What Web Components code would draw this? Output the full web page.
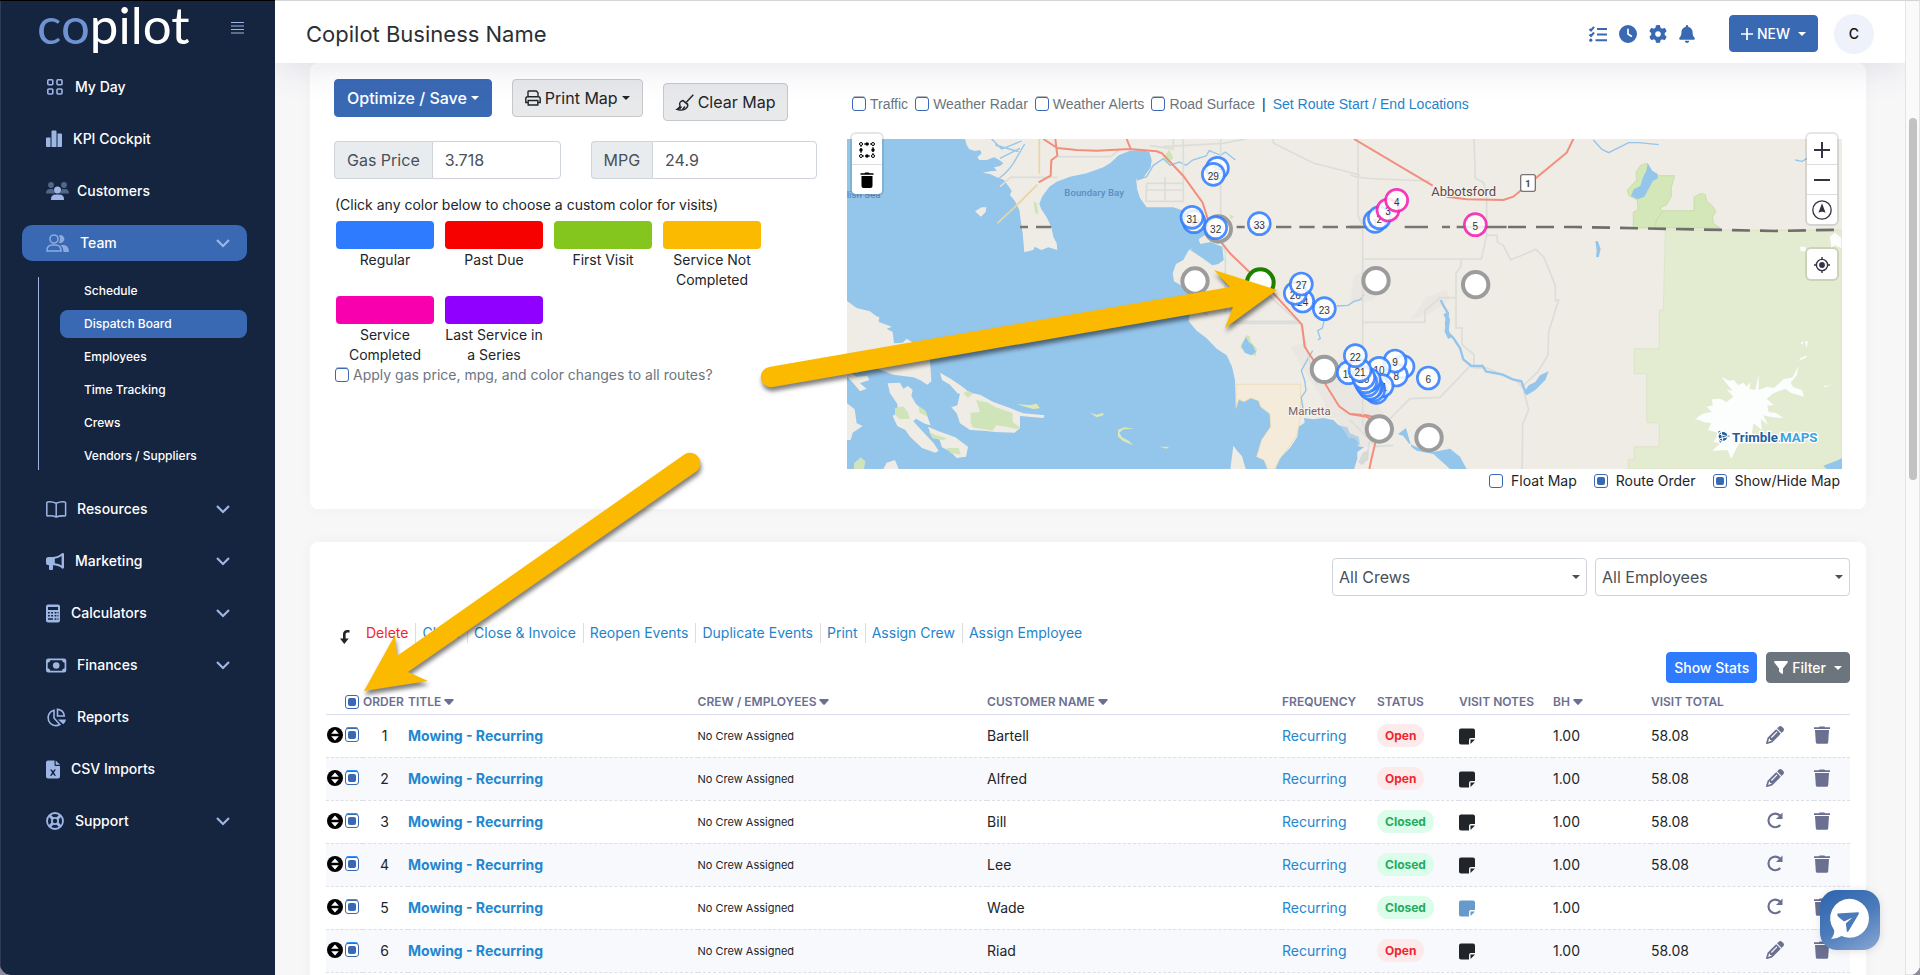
<!DOCTYPE html>
<html lang="en">
<head>
<meta charset="utf-8">
<title>Copilot - Dispatch Board</title>
<style>
  html, body { margin: 0; height: 100%; }
  body { background: #8e8b9d; font-family: Inter, "Liberation Sans", sans-serif; font-size: 14px; line-height: 20px; color: #212529; overflow: hidden; }
</style>
</head>
<body>
<app-shell></app-shell>
<script>
const define = (name, html, setup) => {
  const template = document.createElement('template');
  template.innerHTML = html;
  customElements.define(name, class extends HTMLElement {
    constructor() {
      super();
      this.attachShadow({ mode: 'open' }).append(template.content.cloneNode(true));
    }
    connectedCallback() {
      if (setup && !this.ready) { this.ready = true; setup.call(this, this.shadowRoot); }
    }
  });
};

/* name: [width, height, viewBox, markup] */
const ICONS = {
  menu: [13, 12, '0 0 13 12', '<path d="M0 .5h13M0 4h13M0 7.500h13M0 11h13" stroke="currentColor" stroke-width="1.200"/>'],
  grid: [18, 18, '0 0 18 18', '<g fill="none" stroke="currentColor" stroke-width="1.600"><rect x="1.800" y="1.800" width="5" height="5" rx="1"/><rect x="11" y="1.800" width="5" height="5" rx="1"/><rect x="1.800" y="11" width="5" height="5" rx="1"/><rect x="11" y="11" width="5" height="5" rx="1"/></g>'],
  bars: [16, 18, '0 0 16 18', '<path d="M0 8.500q0-1 1-1h3.500V17H1q-1 0-1-1zM5.500 1.500q0-1 1-1h3q1 0 1 1V17h-5zM11.500 3.500H15q1 0 1 1V16q0 1-1 1h-3.500z"/>'],
  customers: [20, 20, '1 0 20 20', '<g opacity=".45"><circle cx="6" cy="4" r="2.900"/><circle cx="19" cy="4" r="2.900"/><path d="M1 12.500q0-4.500 4-4.500h3l2 4.500zM24 12.500q0-4.500-4-4.500h-3l-2 4.500z"/></g><circle cx="12.500" cy="9" r="3.500"/><path d="M6 19q-.5-5.500 5-5.500h3q5.500 0 5 5.500z"/>'],
  team: [23, 20, '0 0 23 20', '<g opacity=".85"><circle cx="8" cy="6" r="4" fill="none" stroke="currentColor" stroke-width="1.600"/><path d="M1 18q-.3-6 5.500-6h3q5.500 0 5.500 6z" fill="none" stroke="currentColor" stroke-width="1.600"/><path d="M13 2.300a4 4 0 1 1 0 7.500q2-3.700 0-7.500zM16 12h2q5 1 5 7h-5.500q0-4.500-3-6.800z"/></g>'],
  book: [20, 17, '0 0 20 17', '<path d="M10.200 2.300Q6 .4 1.500 1q-.7 0-.7.700v12.600q0 .7.700.7 5-.5 8.700 1 4-1.500 8.700-1 .7 0 .7-.7V1.700q0-.7-.7-.7-4.500-.6-8.700 1.300zv13.500" fill="none" stroke="currentColor" stroke-width="1.500"/>'],
  horn: [18, 19, '0 0 18 19', '<path d="M16 1.200c.8-.6 2-.2 2 .8v13.600c0 1-1.200 1.500-2 .8Q13 13.600 7 13.300V17q0 1-1 1H4q-1 0-1-1v-3.700q-3 0-3-2.500V7.500q0-2.500 2.500-2.500H7Q13 4.200 16 1.200zM15.600 4Q12.500 6.300 8.800 6.700v4.600q4 .3 6.800 2.300z" fill-rule="evenodd"/>'],
  calc: [14, 19, '0 0 14 19', '<path fill-rule="evenodd" d="M2 .5h10q2 0 2 2v14q0 2-2 2H2q-2 0-2-2v-14q0-2 2-2zM2 3v3h10V3zM2 8v1.600h1.800V8zM5.200 8v1.600H7V8zM8.600 8v1.600h1.800V8zM11.500 8v1.600h1V8zM2 11v1.600h1.800V11zM5.200 11v1.600H7V11zM8.600 11v1.600h1.800V11zM11.500 11v1.600h1V11zM2 14.200v1.600h5v-1.600zM8.600 14.200v1.600h1.800v-1.600zM11.500 14.200v1.600h1v-1.600z"/>'],
  money: [20, 15, '0 0 20 15', '<path fill-rule="evenodd" d="M2.300.5h15.700q2.300 0 2.300 2.300v9.400q0 2.300-2.300 2.300H2.300Q0 14.500 0 12.200V2.800Q0 .5 2.300.5zM4.300 2.200q-.3 2.300-2.600 2.600v5.400q2.300.3 2.600 2.600H16q.3-2.300 2.600-2.600V4.800q-2.300-.3-2.600-2.600z"/><circle cx="10.200" cy="7.500" r="3.300"/>'],
  pie: [20, 19, '0 0 20 19', '<g fill="none" stroke="currentColor" stroke-width="1.600"><path d="M8 2.200A7.800 7.800 0 1 0 13.800 16.500L8 10z"/><path d="M11.500 1.200V8h6.800q-.5-6-6.800-6.800z"/></g><path d="M12 11.500h8q-.2 2.500-2.800 4.800z"/>'],
  csv: [14, 19, '0 0 14 19', '<path fill-rule="evenodd" d="M2 .5h6.500V5q0 1 1 1H14v10.500q0 2-2 2H2q-2 0-2-2v-14q0-2 2-2zM4 9.500l2.100 3L4 15.700h1.700L7 13.700l1.300 2H10l-2.100-3.200 2.100-3H8.300L7 11.300 5.700 9.500z"/><path d="M9.700.5L14 4.800H9.700z"/>'],
  life: [18, 18, '0 0 18 18', '<g fill="none" stroke="currentColor"><circle cx="9" cy="9" r="8" stroke-width="1.800"/><circle cx="9" cy="9" r="3.100" stroke-width="1.800"/><path d="M3.500 3.500l3.300 3.300M14.500 3.500l-3.300 3.300M3.500 14.500l3.300-3.300M14.500 14.500l-3.300-3.300" stroke-width="3"/></g>'],
  chevron: [14, 9, '0 0 14 9', '<path d="M1 1l6 6 6-6" fill="none" stroke="currentColor" stroke-width="2.200"/>'],
  tasks: [18, 18, '0 0 18 18', '<path d="M.5 4l1.500 1.500L5 1.800M.5 9.500L2 11l3-3.500M8 4h10M8 9.500h10M6.500 15.200H18" fill="none" stroke="currentColor" stroke-width="2"/><circle cx="1.800" cy="15.200" r="1.600"/>'],
  clock: [18, 18, '0 0 512 512', '<path d="M256 0a256 256 0 1 1 0 512A256 256 0 1 1 256 0zM232 120V256c0 8 4 15.500 10.700 20l96 64c11 7.400 25.900 4.400 33.300-6.700s4.400-25.900-6.700-33.300L280 243.200V120c0-13.300-10.700-24-24-24s-24 10.700-24 24z"/>'],
  gear: [18, 18, '0 0 512 512', '<path d="M495.900 166.600c3.200 8.700 .5 18.400-6.400 24.600l-43.300 39.400c1.100 8.300 1.700 16.800 1.700 25.400s-.6 17.100-1.700 25.400l43.300 39.400c6.900 6.200 9.600 15.900 6.400 24.600c-4.400 11.900-9.700 23.300-15.800 34.300l-4.700 8.100c-6.600 11-14 21.400-22.100 31.200c-5.900 7.200-15.700 9.600-24.500 6.800l-55.700-17.700c-13.400 10.300-28.200 18.900-44 25.400l-12.500 57.100c-2 9.100-9 16.300-18.200 17.800c-13.800 2.300-28 3.500-42.500 3.500s-28.700-1.200-42.500-3.500c-9.200-1.500-16.200-8.700-18.200-17.800l-12.500-57.100c-15.800-6.500-30.600-15.100-44-25.400L83.100 425.900c-8.800 2.800-18.600 .3-24.500-6.800c-8.100-9.800-15.500-20.200-22.100-31.200l-4.700-8.100c-6.100-11-11.400-22.400-15.800-34.300c-3.200-8.700-.5-18.400 6.400-24.600l43.300-39.400C64.600 273.100 64 264.600 64 256s.6-17.100 1.700-25.400L22.400 191.200c-6.900-6.200-9.600-15.900-6.400-24.600c4.400-11.900 9.700-23.300 15.800-34.300l4.700-8.100c6.600-11 14-21.400 22.100-31.200c5.900-7.200 15.700-9.600 24.500-6.800l55.700 17.700c13.400-10.300 28.200-18.900 44-25.400l12.500-57.100c2-9.100 9-16.300 18.200-17.800C227.300 1.200 241.500 0 256 0s28.700 1.200 42.500 3.500c9.200 1.500 16.200 8.700 18.200 17.800l12.500 57.100c15.800 6.500 30.600 15.100 44 25.400l55.700-17.700c8.800-2.800 18.600-.3 24.500 6.800c8.100 9.800 15.500 20.200 22.100 31.200l4.700 8.100c6.100 11 11.400 22.400 15.800 34.300zM256 336a80 80 0 1 0 0-160 80 80 0 1 0 0 160z"/>'],
  bell: [16, 18, '0 0 448 512', '<path d="M224 0c-17.700 0-32 14.300-32 32V51.200C119 66 64 130.600 64 208v18.800c0 47-17.300 92.400-48.500 127.600l-7.400 8.300c-8.400 9.400-10.400 22.900-5.300 34.400S19.400 416 32 416H416c12.600 0 24-7.400 29.200-18.900s3.100-25-5.300-34.400l-7.400-8.300C401.300 319.200 384 273.900 384 226.800V208c0-77.400-55-142-128-156.800V32c0-17.700-14.300-32-32-32zm45.300 493.300c12-12 18.700-28.300 18.700-45.300H160c0 17 6.700 33.300 18.700 45.300s28.300 18.700 45.300 18.700s33.300-6.700 45.300-18.700z"/>'],
  plus: [12, 12, '0 0 12 12', '<path d="M6 0v12M0 6h12" stroke="currentColor" stroke-width="1.700"/>'],
  printer: [16, 16, '0 0 16 16', '<g fill="none" stroke="currentColor" stroke-width="1.400"><path d="M3 6.500V1.700Q3 1 3.700 1h7.600L13 2.700v3.800M3 12.500H.8V8.700q0-2 2-2h10.400q2 0 2 2v3.800H13"/><path d="M3.200 10.500h9.600V15H3.200z"/></g>'],
  brush: [18, 17, '0 0 18 17', '<g fill="none" stroke="currentColor" stroke-width="1.400"><path d="M17.300.7l-7 7.500"/><path d="M7 6.500Q2.500 8 4 11.500q.3 2-3 3.800 6 2 9-.8 2.500-2 1.500-4.500zM6.800 6.500l4.700 4"/><path d="M3.500 15l2-2.500M6.500 15.500L9 12.500"/></g>'],
  turn: [10, 14, '0 0 10 14', '<path d="M9.500 1.300H7.300q-3 0-3 3V9" fill="none" stroke="currentColor" stroke-width="2.600"/><path d="M0 8.500h8.700L4.300 14z"/>'],
  sort: [10, 6, '0 0 10 6', '<path d="M1 0h8q1.300.2.500 1.200L5.800 5.500q-.8.700-1.600 0L.5 1.200Q-.3.200 1 0z"/>'],
  handle: [16, 16, '0 0 16 16', '<circle cx="8" cy="8" r="8" fill="#000"/><path d="M8 2.600l3.800 4.200H4.200zM8 13.400l3.800-4.200H4.200z" fill="#fff"/>'],
  note: [16, 17, '0 0 16 17', '<path d="M2 .5h12q2 0 2 2V10h-4q-2 0-2 2v4.500H2q-2 0-2-2v-12q0-2 2-2z"/><path d="M11.500 11.500H16l-4.500 4.500z"/>'],
  pencil: [18, 18, '0 0 512 512', '<path d="M410.300 231l11.300-11.300-33.900-33.900-62.100-62.100L291.700 89.800l-11.300 11.300-22.600 22.600L58.600 322.900c-10.400 10.400-18 23.300-22.200 37.400L1 480.700c-2.500 8.400-.2 17.500 6.100 23.700s15.300 8.500 23.700 6.100l120.300-35.400c14.100-4.200 27-11.800 37.400-22.200L387.700 253.700 410.300 231zM160 399.400l-9.100 22.700c-4 3.100-8.500 5.400-13.300 6.900L59.400 452l23-78.100c1.400-4.900 3.800-9.400 6.900-13.300l22.700-9.100v32c0 8.800 7.200 16 16 16h32zM362.700 18.700L348.300 33.200 325.700 55.800 314.300 67.100l33.900 33.900 62.100 62.100 33.900 33.900 11.300-11.300 22.600-22.600 14.500-14.500c25-25 25-65.500 0-90.500L453.300 18.700c-25-25-65.500-25-90.500 0zm-47.400 168l-144 144c-6.200 6.200-16.400 6.200-22.600 0s-6.200-16.400 0-22.600l144-144c6.200-6.200 16.400-6.200 22.600 0s6.200 16.400 0 22.600z"/>'],
  trash: [16, 18, '0 0 16 18', '<path d="M0 1.300h5L5.600.4h4.800l.6.900h5V3H0zM1 4h14l-.8 12.300q-.1 1.500-1.600 1.500H3.400q-1.500 0-1.600-1.500z"/>'],
  redo: [17, 17, '0 0 17 17', '<path d="M14 3.500A6.800 6.800 0 1 0 14.300 13" fill="none" stroke="currentColor" stroke-width="2.100"/><path d="M16.500.5V7H10z"/>'],
  funnel: [14, 13, '0 0 14 13', '<path d="M1 0h12q1.500.3.500 1.700L9 7.500V12q-.2 1.300-1.300.7L5.500 11q-.5-.4-.5-1V7.500L.5 1.700Q-.5.300 1 0z"/>'],
  polygon: [18, 18, '0 0 18 18', '<path d="M3 3h12v12H3z" fill="none" stroke="#000" stroke-dasharray="2 1"/><g fill="#fff" stroke="#000"><circle cx="3" cy="3" r="1.500"/><circle cx="15" cy="3" r="1.500"/><circle cx="3" cy="15" r="1.500"/><circle cx="15" cy="15" r="1.500"/></g><circle cx="9" cy="3" r="1.700"/><circle cx="9" cy="15" r="1.700"/><circle cx="3" cy="9" r="1.700"/><circle cx="15" cy="9" r="1.700"/>'],
  bin: [14, 16, '0 0 14 16', '<path d="M.5 1.300h4L5.200.4h3.600l.7.900h4v1.500H.5zM1.500 4h11v10q0 2-2 2h-7q-2 0-2-2z"/>'],
  zoomin: [16, 16, '0 0 16 16', '<path d="M8 0v16M0 8h16" stroke="currentColor" stroke-width="2"/>'],
  zoomout: [16, 16, '0 0 16 16', '<path d="M0 8h16" stroke="currentColor" stroke-width="2"/>'],
  compass: [20, 20, '0 0 20 20', '<circle cx="10" cy="10" r="9.200" fill="none" stroke="currentColor" stroke-width="1.300"/><path d="M10 3.300l3.600 9.500Q10 10.800 6.400 12.800z"/>'],
  locate: [16, 16, '0 0 16 16', '<circle cx="8" cy="8" r="5.600" fill="none" stroke="currentColor" stroke-width="1.400"/><circle cx="8" cy="8" r="2.900"/><path d="M8 0v3M8 13v3M0 8h3M13 8h3" stroke="currentColor" stroke-width="1.400"/>'],
  chat: [60, 60, '0 0 60 60', '<path d="M29.500 8.800a19.500 19.500 0 1 1-8 37.300Q17 49 11 49q3.500-4 3.200-8.800A19.500 19.500 0 0 1 29.500 8.800z" fill="#fff"/><path d="M17.500 23.500L38 22.300q1.500.2.800 1.700L28.300 41.500q-1 1-1.500-.5l-1-7.500 6.700-6-8.500 4-5.500-4.500q-2-2-1-3.500z" fill="#4a7ab9"/>'],
};

define('ui-icon', `<style>:host{display:inline-flex;flex:none}svg{display:block;overflow:visible;fill:currentColor}</style><svg aria-hidden="true"></svg>`,
function (root) {
  const [w, h, box, body] = ICONS[this.getAttribute('name')];
  const svg = root.querySelector('svg');
  svg.setAttribute('width', w); svg.setAttribute('height', h);
  svg.setAttribute('viewBox', box); svg.innerHTML = body;
});

define('check-box', `
<style>
  :host { display: inline-flex; color: #6c757d; }
  label { display: inline-flex; align-items: center; gap: var(--gap, 4px); white-space: nowrap; }
  input { appearance: none; display: grid; place-items: center; width: 14px; height: 14px; margin: 0; border: 1px solid #3a69b4; border-radius: 3px; background: #fff; box-shadow: 0 -2px 0 -1px var(--lip, transparent); }
  input:checked::before { content: ""; width: 8px; height: 8px; border-radius: 2px; background: #3a69b4; }
  :host([bare]) slot { display: none; }
</style>
<label><input type="checkbox"><slot></slot></label>`,
function (root) {
  const input = root.querySelector('input');
  input.checked = this.hasAttribute('checked');
  if (this.hasAttribute('bare')) input.setAttribute('aria-label', this.getAttribute('bare'));
});

define('ui-button', `
<style>
  :host { display: inline-flex; }
  button { display: inline-flex; align-items: center; justify-content: center; gap: 4px; box-sizing: border-box; width: 100%; height: 38px; padding: 0 12px; border: 1px solid #c6c8ca; border-radius: 4px; background: #e7e9eb; color: #212529; font: 400 16px/24px Inter, sans-serif; white-space: nowrap; }
  :host([tone=primary]) button { background: #3a69b4; border-color: #3a69b4; color: #fff; font-weight: 500; }
  :host([tone=bright]) button { background: #2f7bff; border-color: #2f7bff; color: #fff; }
  :host([tone=dark]) button { background: #6c757d; border-color: #6c757d; color: #fff; }
  :host([size=small]) button { height: 31px; padding: 0 7px; font-size: 14px; font-weight: 500; }
  :host([size=medium]) button { font-size: 14px; padding: 0 11px; height: 37px; }
  :host([caret]) button::after { content: ""; border: 4px solid transparent; border-top-color: currentColor; border-bottom: 0; }
  :host([size]) button::after { margin-left: 4px; }
</style>
<button type="button"><slot></slot></button>`);

define('nav-item', `
<style>
  :host { display: block; }
  a { display: flex; align-items: center; gap: 11px; box-sizing: border-box; height: 36px; margin: 0 28px 0 22px; padding: 0 17px 0 24px; border-radius: 10px; color: #fff; font-weight: 500; text-decoration: none; }
  :host([active]) a { background: #3a69b4; }
  ui-icon { color: #9db6e4; }
  .chevron { margin-left: auto; }
</style>
<a href="#"><slot></slot></a>`,
function (root) {
  const link = root.querySelector('a');
  link.insertAdjacentHTML('afterbegin', `<ui-icon name="${this.getAttribute('icon')}"></ui-icon>`);
  if (this.hasAttribute('expands')) link.insertAdjacentHTML('beforeend', '<ui-icon class="chevron" name="chevron"></ui-icon>');
});

define('side-nav', `
<style>
  :host { display: block; background: #15243f; color: #fff; box-shadow: inset 1px 0 #2d3b55; overflow: hidden; }
  .brand { display: flex; align-items: flex-start; justify-content: space-between; height: 68px; padding: 0 31px 0 37px; }
  .logo { font: 400 51px/48px Lato, sans-serif; color: #fff; }
  .logo b { font-weight: 400; color: #6f93d2; }
  .brand ui-icon { color: #9db6e4; margin-top: 21px; }
  nav { display: flex; flex-direction: column; gap: 16px; }
  ul { list-style: none; display: flex; flex-direction: column; gap: 5px; margin: 0 28px 5px 38px; padding: 0 0 0 21px; border-left: 1px solid #9db6e4; }
  li a { display: block; height: 28px; line-height: 28px; padding-left: 24px; border-radius: 8px; font-size: 12px; font-weight: 500; color: #fff; text-decoration: none; }
  li a.on { background: #3a69b4; }
</style>
<div class="brand"><span class="logo"><b>co</b>pilot</span><ui-icon name="menu"></ui-icon></div>
<nav>
  <nav-item icon="grid">My Day</nav-item>
  <nav-item icon="bars">KPI Cockpit</nav-item>
  <nav-item icon="customers">Customers</nav-item>
  <nav-item icon="team" active expands>Team</nav-item>
  <ul>
    <li><a href="#">Schedule</a></li>
    <li><a href="#" class="on">Dispatch Board</a></li>
    <li><a href="#">Employees</a></li>
    <li><a href="#">Time Tracking</a></li>
    <li><a href="#">Crews</a></li>
    <li><a href="#">Vendors / Suppliers</a></li>
  </ul>
  <nav-item icon="book" expands>Resources</nav-item>
  <nav-item icon="horn" expands>Marketing</nav-item>
  <nav-item icon="calc" expands>Calculators</nav-item>
  <nav-item icon="money" expands>Finances</nav-item>
  <nav-item icon="pie">Reports</nav-item>
  <nav-item icon="csv">CSV Imports</nav-item>
  <nav-item icon="life" expands>Support</nav-item>
</nav>`);

define('top-bar', `
<style>
  :host { display: flex; align-items: center; box-sizing: border-box; height: 63px; padding: 3px 31px 0; background: #fff; border-top: 1px solid #d4d4d6; box-shadow: 0 4px 36px rgba(60, 60, 110, .13); position: relative; z-index: 1; }
  h1 { margin: 0; font-size: 22px; line-height: 30px; font-weight: 400; color: #2c2f33; flex: 1; }
  .icons { display: flex; gap: 12px; margin-right: 34px; color: #3a69b4; }
  .avatar { width: 40px; height: 40px; margin-left: 16px; border: 0; border-radius: 50%; background: #eff2fa; color: #111; font: 500 14px Inter, sans-serif; }
</style>
<h1>Copilot Business Name</h1>
<div class="icons"><ui-icon name="tasks"></ui-icon><ui-icon name="clock"></ui-icon><ui-icon name="gear"></ui-icon><ui-icon name="bell"></ui-icon></div>
<ui-button tone="primary" size="medium" caret><ui-icon name="plus"></ui-icon>NEW</ui-button>
<button class="avatar" type="button">C</button>`);

define('input-group', `
<style>
  :host { display: flex; min-width: 0; }
  label { box-sizing: border-box; height: 38px; padding: 6px 12px; border: 1px solid #ced4da; border-right: 0; border-radius: 4px 0 0 4px; background: #e9ecef; font-size: 16px; line-height: 24px; color: #495057; white-space: nowrap; }
  input { box-sizing: border-box; flex: 1; width: 0; min-width: 0; height: 38px; padding: 0 12px; border: 1px solid #ced4da; border-radius: 0 4px 4px 0; background: #fff; font: 400 16px Inter, sans-serif; color: #495057; }
</style>
<label for="field"><slot></slot></label><input id="field" type="text">`,
function (root) { root.querySelector('input').value = this.getAttribute('value'); });

define('route-settings', `
<style>
  :host { display: block; padding-top: 16px; }
  .actions { display: flex; align-items: flex-start; gap: 20px; height: 42px; }
  .actions ui-button:last-child { margin-top: 4px; }
  .fields { display: grid; grid-template-columns: repeat(2, minmax(0, 1fr)); gap: 30px; margin: 20px 6px 16px 0; }
  p { margin: 0 1px 6px; }
  .colors { display: grid; grid-template-columns: repeat(4, 98px); gap: 6px 11px; margin-left: 2px; }
  .colors button { display: flex; flex-direction: column; justify-content: flex-start; width: 100%; height: 69px; padding: 0; border: 0; background: none; font: inherit; color: inherit; }
  .colors i { flex: none; width: 98px; height: 28px; margin-bottom: 1px; border-radius: 4px; }
  .colors span { width: 98px; text-align: center; }
  check-box { --lip: #b5b8bd; margin-left: 1px; }
</style>
<div class="actions">
  <ui-button tone="primary" caret>Optimize / Save</ui-button>
  <ui-button caret><ui-icon name="printer"></ui-icon>Print Map</ui-button>
  <ui-button><ui-icon name="brush"></ui-icon>Clear Map</ui-button>
</div>
<div class="fields"><input-group value="3.718">Gas Price</input-group><input-group value="24.9">MPG</input-group></div>
<p>(Click any color below to choose a custom color for visits)</p>
<div class="colors">
  <button type="button"><i style="background:#2f7bff"></i><span>Regular</span></button>
  <button type="button"><i style="background:#f60000"></i><span>Past Due</span></button>
  <button type="button"><i style="background:#84c61e"></i><span>First Visit</span></button>
  <button type="button"><i style="background:#fbb900"></i><span>Service Not Completed</span></button>
  <button type="button"><i style="background:#f800ae"></i><span>Service Completed</span></button>
  <button type="button"><i style="background:#8f00ff"></i><span>Last Service in a Series</span></button>
</div>
<check-box>Apply gas price, mpg, and color changes to all routes?</check-box>`);

/* Pins in map units (three to a pixel), drawn in order; kind: b visit, p completed, g depot, s start */
const PINS = [
  [1135, 447, 'g'], [1065, 603, 'g'], [1261, 608, 's'], [1453, 868, 'g'], [1608, 602, 'g'], [1907, 614, 'g'], [1618, 1047, 'g'], [1767, 1073, 'g'],
  [1605, 424, 'b', '1'], [1618, 413, 'b', '2'], [1644, 390, 'p', '3'], [1670, 361, 'p', '4'], [1906, 434, 'p', '5'],
  [1765, 894, 'b', '6'], [1689, 860, 'b', '7'], [1669, 885, 'b', '8'], [1665, 843, 'b', '9'], [1617, 865, 'b', '10'],
  [1609, 937, 'b', '13'], [1626, 917, 'b', '11'], [1601, 930, 'b'], [1595, 920, 'b'], [1590, 925, 'b'], [1583, 915, 'b'], [1588, 899, 'b', '14'],
  [1525, 878, 'b', '19'], [1577, 905, 'b'], [1571, 893, 'b', '20'], [1560, 871, 'b', '21'], [1546, 827, 'b', '22'],
  [1453, 686, 'b', '23'], [1388, 663, 'b', '24'], [1366, 640, 'b', '26'], [1384, 612, 'b', '27'],
  [1132, 265, 'b', '28'], [1120, 283, 'b', '29'], [1062, 425, 'b', '30'], [1056, 412, 'b', '31'], [1127, 443, 'b', '32'], [1258, 431, 'b', '33'],
];

define('route-map', `
<style>
  :host { display: block; position: relative; height: 330px; }
  svg.map { display: block; width: 100%; height: 100%; background: #94c5eb; }
  text { font-family: Roboto, sans-serif; }
  .land { fill: #efece6; } .water { fill: #94c5eb; } .green { fill: #cfe4b9; } .park { fill: #d4e7b8; stroke: #bcd99a; stroke-width: 2; }
  .road { fill: none; stroke: #dcddd9; stroke-width: 5; } .high { fill: none; stroke: #f28e7c; stroke-width: 6; }
  .creek { fill: none; stroke: #94c5eb; stroke-width: 4; }
  .num { font: 30px "Liberation Sans", sans-serif; fill: #333; text-anchor: middle; }
  .tools { position: absolute; top: -5px; display: grid; width: 30px; border-radius: 4px; background: #fff; box-shadow: 0 0 0 2px rgba(0, 0, 0, .1); overflow: visible; }
  .left { left: 5px; } .right { right: 5px; } .lower { top: 110px; }
  .tools button { display: grid; place-items: center; width: 30px; height: 30px; padding: 0; border: 0; border-top: 1px solid #ddd; background: none; color: #333344; }
  .tools button:first-child { border-top-color: transparent; }
  .left button { color: #000; }
</style>
<svg class="map" viewBox="21 177 2985 990" preserveAspectRatio="xMidYMid slice" role="img" aria-label="Route map">
  <path class="land" d="M375 177L380 195 388 208 405 213 420 210 425 220 412 232 418 240 440 240 462 232 478 240 490 250 480 258 462 262 470 272 450 274 428 278 450 282 470 292 492 300 505 318 515 332 510 345 524 362 538 390 542 420 548 460 553 517 580 510 584 500 604 510 625 502 652 510 650 490 640 470 634 440 620 412 604 388 598 372 606 350 628 320 650 305 690 290 740 280 790 262 812 248 836 226 870 212 905 210 928 216 935 240 932 262 912 290 902 298 888 296 892 330 900 354 920 382 1000 382 1040 395 1080 412 1104 432 1110 455 1078 476 1060 500 1045 512 1030 540 1008 552 998 580 1002 604 1030 620 1060 634 1100 640 1125 632 1110 660 1080 690 1050 696 1046 724 1070 752 1100 775 1130 806 1160 826 1176 860 1185 900 1188 985 1196 958 1212 965 1232 954 1256 962 1262 980 1290 1002 1292 1040 1265 1080 1250 1130 1272 1140 1282 1167 1306 1167 1322 1132 1350 1104 1372 1070 1376 1040 1394 1028 1392 1014 1420 1018 1450 1014 1480 1020 1496 1036 1522 1042 1530 1060 1556 1070 1560 1092 1540 1112 1542 1140 1530 1150V1167H3006V177z"/>
  <g class="land">
    <path d="M21 663L50 684 90 694 108 708 118 712 116 726 156 740 140 746 158 756 162 790 188 788 200 776 222 790 250 796 268 818 272 870 274 904 262 914 240 900 220 892 160 884 100 862 84 850 40 842 70 868 50 880 21 860zM21 870L50 890 82 888 88 900 60 910 80 926 60 934 40 910 21 890z"/>
    <path d="M143 910L180 908 190 926 204 918 218 930 214 948 228 972 258 998 272 1036 256 1032 228 1016 220 1024 246 1052 280 1088 296 1112 286 1118 246 1104 210 1070 196 1050 172 1038 158 1008 174 996 172 972 150 940z"/>
    <path d="M264 1040L296 1054 346 1072 384 1100 378 1130 350 1134 330 1114 306 1102 298 1078 272 1062z"/>
    <path d="M300 878L332 896 364 918 390 938 378 946 352 940 330 914 306 900zM362 932L420 944 460 966 510 984 550 1000 614 1006 610 1014 540 1008 540 1044 524 1058 466 1056 430 1052 390 1050 360 1030 350 1000 334 982 352 976z"/>
    <path d="M21 970L44 988 50 1030 68 1038 38 1058 32 1080 21 1080zM130 1167L140 1148 165 1140 176 1167zM1180 1097L1194 1115 1206 1129 1217 1167H1171zM405 394L425 382 439 382 437 396 423 410z"/>
    <path d="M530 973L570 975 590 971 600 985 580 987 550 979zM750 998L770 1004 790 998 790 1006 770 1012zM834 1050L852 1042 882 1046 850 1048 838 1058 846 1072 866 1082 880 1096 850 1084 834 1070zM958 1100H988L980 1106z" style="fill:#dfe8b4"/>
  </g>
  <path d="M1188 913H1382V1010L1370 1066 1340 1110 1316 1140 1304 1167H1284L1272 1140 1250 1130 1265 1080 1292 1040 1290 1002 1262 980 1256 962 1232 954 1212 965 1196 958 1188 985z" style="fill:#f4ebda;stroke:#ecd9ae;stroke-width:2"/>
  <path class="water" d="M1075 476l6 16 30-6 36 14 4 40-16 12-18 4-30-22-36-24z"/>
  <path class="water" d="M0 663z"/>
  <g class="green">
    <path d="M408 960l36 8 20 12 54 20v26l22 16-10 6-30-8-32-4-10 16-60-10-6-14v-30l28-2zM165 985l24-6 14 16 6 22-30 0-14-12zM235 978l22 14 6 18-24-12zM266 1055l20 10 36 10-14 6-30-6zM320 1104l36 0 6 20-30-4zM370 940l14-8 16 8-16 14zM42 1150l20-18 14 12-4 23h-30zM580 365l10 4 6 34-10-4zM988 208l12 26-16 16-14-16zM1168 402l14 8-10 8zM1205 790l14-24 10 2 4 18 18 20-4 22-24-8-22-16zM1085 700l18-4v12z"/>
  </g>
  <path class="water" d="M1218 772l8 14 12 10 10 20-14 10-20-8-10-20z"/>
  <g style="fill:#e4e1dc;opacity:.4"><path d="M1350 800l40-10 30 70 60-20 110 0 50 60-40 60 40 50-30 80-60 20-60-90-80-120zM1455 960l50 0 10 60-60-10zM1540 590l50-30 40 50-30 50-70 10zM1760 650l60-20 10 30-60 40-60 20z"/></g>
  <path class="creek" d="M470 300q30-20 50-50l34-58M455 177l30 30 60-24M466 195l70 20M480 235l60-30M890 300l30-10 20-34 30-20 20 20 28-10 20 10 20-16 40-12 10-16 34 14 14-10 30 24M1490 678l34-2 18-12 20-6 10-14M1453 720l-6 24-14 8 8 24-8 4M1418 812l-12 20-22 40 10 30 4 30-14 20 6 40M2260 180l26 28 20 10 60-30h30l60 6M2866 240l20 4 22-12"/>
  <g class="road">
    <path d="M652 230h160l30-24M480 320l32-28h140M920 310h110v54H918zM975 290v74M1030 178v134M918 330h110M1142 177v300l14 40v180M1000 177v30l-70-10M970 200l180-10 70-14M1300 177v12l120 60 140 36M1290 650l90 80H1160M1382 735l30 120 20 60M1180 724h200"/>
  </g>
  <path d="M598 177v104M472 430l60-56 60-60" style="fill:none;stroke:#e9d4a4;stroke-width:5"/>
  <path class="high" d="M610 177L652 204 710 210 770 212 870 207 950 214 966 220 1030 288 1088 368 1108 432 1140 482 1170 520 1226 574 1300 640 1350 694 1386 734 1394 800 1430 856 1456 912 1498 980 1530 1002 1580 1006 1614 1014M646 177l6 50-18 14-2 46-36 20M860 177l12 30"/>
  <path d="M540 441h95M1190 441h375" style="fill:none;stroke:#777772;stroke-width:7;stroke-dasharray:46 24;stroke-dashoffset:22"/>
  <g transform="translate(1530 150)">
    <g class="road">
      <path d="M24 27v230l14 30v600M0 135q30 10 90 12l150 6M372 27l4 118 24 12 10 30v128l-16 72H38M410 316h32v20l18 10 22 44 76-32 24 24 34 84v46l10-2-30 95-2 70-30 50-46 44 18 70-18 44-2 160M334 390l-2 20-14 20v164h18v50l36 30v40h40l90 40 24 30M316 503h-46l-44 38-2 36H38M362 706l-92 96-90 4-70 70M0 870l80 80M50 980l20-100M70 950l60-4"/>
    </g>
    <path class="high" d="M12 27l236 140M290 200l60 8 110 2 30-10 160-132 20-41M0 852l50 8 30 20M76 938l-12 50-6 30"/>
    <path class="park" d="M892 100l-20 6-14 20 2 24-28 30 4 16 26 14 2 30-14 6v48h260l-20-14-2-20 10-16-14-20-14-10-4-20-14-4-20 12v40h-98l-4-8 20-10 14-24v-28l10-35h-50l-20 2z"/>
    <path class="park" d="M938 244l-18 24-6 26" style="fill:none"/>
    <path d="M946 300H1476V1017H835V988H853V950H927V878H890V731H853V656H928V541H940z" style="fill:#e3ebd1;stroke:#d8e3bf;stroke-width:2"/>
    <path d="M1030 882L1042 862 1062 850 1086 846 1070 830 1088 826 1086 808 1110 806 1130 816 1150 800 1130 778 1148 784 1114 740 1136 752 1152 750 1164 766 1180 758 1190 770 1202 756 1198 776 1216 780 1226 732 1226 780 1250 770 1272 774 1300 748 1328 742 1346 708 1340 736 1322 758 1330 772 1356 780 1362 800 1322 788 1306 776 1270 790 1250 806 1272 826 1252 826 1256 846 1280 850 1300 864 1268 862 1240 856 1254 884 1232 868 1236 900 1210 880 1206 910 1216 938 1190 912 1176 930 1164 946 1144 986 1132 960 1086 962 1112 940 1090 936 1108 910 1074 900 1084 880 1060 876 1040 868zM1440 320l14-12 20 16v30l-20-8-10 8zM1350 350l16 0 2 14-16 0zM1352 640l8-8-2 12zM1364 634l10 0-4 20zM1352 684l20-8-6 8-20 8zM1420 768l26-2-24 6z" style="fill:#fcfdfd"/>
    <path class="water" d="M893 100l14 22 16 10 0 14-14 6-26 48-20 8-20-10 8-20 20-10 8-26 10-20zM736 334l8 0 8 24-6 24-8-2 2-18zM596 724l-10 26-30 30-26 16-8-10 14-20 20-10 14-20zM168 894L144 912 160 918 176 940 200 952 250 966 300 956 330 980 350 1017H300L250 972 200 962 184 950zM1476 985l-24 10-20 8-12 4 10 10h46zM0 922l14 4 10 10-2 12 20 4-20 14 0 20-10 32H0z"/>
    <path d="M272 510l10 20 12 20-6 30 8 30 14 14 20 30 10 34 24 20 34 0 10 16 50 10 30 14 26 6 14 36" style="fill:none;stroke:#94c5eb;stroke-width:7"/>
    <path d="M286 550l8 20-4 34 10 20" style="fill:none;stroke:#94c5eb;stroke-width:12"/>
    <path d="M40 970l14-6-2 24-16 14-8-6z" style="fill:#cfe4b9;stroke:#dcd0ee;stroke-width:5"/>
    <path d="M0 291h110M164 291h70M276 291h24M320 291h150" style="fill:none;stroke:#777772;stroke-width:7"/>
    <path d="M474 291h200l600 12 200-4" style="fill:none;stroke:#6e6f6b;stroke-width:8;stroke-dasharray:54 30"/>
    <text x="341" y="198" font-size="39" text-anchor="middle" style="fill:#5f4745;stroke:#f6f3ee;stroke-width:6;paint-order:stroke">Abbotsford</text>
    <rect x="512" y="134" width="44" height="50" rx="6" fill="#fff" stroke="#777" stroke-width="4"/>
    <text x="534" y="170" font-size="28" text-anchor="middle" font-weight="700" fill="#444">1</text>
    <g style="stroke:#fff;stroke-width:8;paint-order:stroke">
      <path d="M1106 902l34 16-30 20-6-18z" fill="#1d5f9e"/><circle cx="1119" cy="919" r="13" fill="#1d5f9e"/>
      <text x="1146" y="935" font-size="40" font-weight="700" fill="#1d5f9e">Trimble.</text>
      <text x="1290" y="935" font-size="40" font-weight="700" fill="#3aa5dc">MAPS</text>
    </g>
    <path d="M1108 912l24 8M1108 926l22-4M1114 906l4 26" stroke="#fff" stroke-width="3"/>
  </g>
  <text x="673" y="349" font-size="29" font-weight="500" style="fill:#5f8cbf">Boundary Bay</text>
  <text x="20" y="353" font-size="29" font-weight="500" style="fill:#5f8cbf">lish Sea</text>
  <text x="1345" y="1004" font-size="34" style="fill:#7d5f5c;stroke:#f6f3ee;stroke-width:6;paint-order:stroke">Marietta</text>
  <g id="pins"></g>
</svg>
<div class="tools left"><button type="button" aria-label="Select area"><ui-icon name="polygon"></ui-icon></button><button type="button" aria-label="Clear selection"><ui-icon name="bin"></ui-icon></button></div>
<div class="tools right"><button type="button" aria-label="Zoom in"><ui-icon name="zoomin"></ui-icon></button><button type="button" aria-label="Zoom out"><ui-icon name="zoomout"></ui-icon></button><button type="button" aria-label="Reset north"><ui-icon name="compass"></ui-icon></button></div>
<div class="tools right lower"><button type="button" aria-label="My location"><ui-icon name="locate"></ui-icon></button></div>`,
function (root) {
  const ring = { b: ['#2f7bff', 33, 8], p: ['#f51bb0', 33, 8], g: ['#9c9c9c', 38, 12], s: ['#1f8000', 40, 12] };
  root.getElementById('pins').innerHTML = PINS.map(([x, y, kind, text = '']) => {
    const [color, r, w] = ring[kind];
    const fade = kind === 'b' || kind === 'p' ? 0.86 : 1;
    return `<circle cx="${x}" cy="${y}" r="${r}" fill="#fff" fill-opacity="${fade}" stroke="${color}" stroke-opacity="${fade}" stroke-width="${w}"/>` +
      (text && `<text class="num" x="${x}" y="${y + 16}">${text}</text>`);
  }).join('');
});

define('map-panel', `
<style>
  :host { display: block; }
  .layers { display: flex; align-items: center; gap: 7px; padding: 31px 0 25px 5px; font-family: "Liberation Sans", sans-serif; color: #212529; white-space: nowrap; }
  .layers check-box { --lip: #b5b8bd; }
  .layers a { color: #1f83cc; text-decoration: none; }
  .options { display: flex; justify-content: flex-end; gap: 17px; padding: 2px 2px 18px 0; }
  .options check-box { --gap: 8px; color: #212529; }
</style>
<div class="layers">
  <check-box>Traffic</check-box><check-box>Weather Radar</check-box><check-box>Weather Alerts</check-box><check-box>Road Surface</check-box>
  <span>|</span><a href="#">Set Route Start / End Locations</a>
</div>
<route-map></route-map>
<div class="options"><check-box>Float Map</check-box><check-box checked>Route Order</check-box><check-box checked>Show/Hide Map</check-box></div>`);

define('select-box', `
<style>
  :host { display: block; position: relative; width: 255px; }
  select { appearance: none; box-sizing: border-box; width: 100%; height: 38px; padding: 0 6px; border: 1px solid #ced4da; border-radius: 4px; background: #fff; color: #495057; font: 400 16px Inter, sans-serif; }
  :host::after { content: ""; position: absolute; right: 7px; top: 17px; border: 4px solid transparent; border-top-color: #495057; border-bottom: 0; pointer-events: none; }
</style>
<select></select>`,
function (root) {
  const select = root.querySelector('select');
  select.add(new Option(this.getAttribute('value')));
  select.setAttribute('aria-label', this.getAttribute('value'));
});

const VISITS = [
  ['Bartell', 'Open', '58.08'], ['Alfred', 'Open', '58.08'], ['Bill', 'Closed', '58.08'],
  ['Lee', 'Closed', '58.08'], ['Wade', 'Closed', ''], ['Riad', 'Open', '58.08'],
];

define('visit-table', `
<style>
  :host { display: block; }
  table { width: 100%; table-layout: fixed; border-collapse: collapse; }
  th { box-sizing: border-box; height: 31px; padding: 7px 0 0; border-bottom: 1px solid #dcdcec; text-align: left; font-size: 12px; line-height: 20px; font-weight: 600; color: #6b6f90; white-space: nowrap; }
  th ui-icon { margin-left: 3px; vertical-align: 1px; }
  th check-box { vertical-align: middle; margin-left: 19px; }
  td { box-sizing: border-box; height: 43px; padding: 0; border-bottom: 1px dashed #dcdee8; white-space: nowrap; vertical-align: middle; }
  tr:nth-child(even) td { background: #f8f9fd; }
  a { color: #2387cf; text-decoration: none; }
  td a.title { font-weight: 700; }
  .pick { display: flex; gap: 2px; align-items: center; padding: 0 0 2px 1px; }
  .pick check-box { --lip: #2f93ff; }
  .order { text-align: center; padding-right: 2px; }
  .crew { font-size: 11px; }
  .badge { display: inline-block; height: 23px; line-height: 23px; padding: 0 8px; border-radius: 11px; font-size: 12px; font-weight: 700; background: #fdebeb; color: #f0262d; vertical-align: middle; }
  .badge.Closed { background: #dcfdea; color: #22ab62; }
  td button { display: block; margin: 0; padding: 0 0 2px; border: 0; background: none; color: #6b6f90; }
  .note { color: #212529; } .note.blue { color: #6699cc; }
  td ui-icon { vertical-align: middle; }
</style>
<table>
  <colgroup><col style="width:37px"><col style="width:45px"><col style="width:19%"><col style="width:19%"><col><col style="width:95px"><col style="width:82px"><col style="width:94px"><col style="width:98px"><col style="width:115px"><col style="width:48px"><col style="width:36px"></colgroup>
  <thead><tr>
    <th><check-box bare="Select all visits" checked></check-box></th><th>ORDER</th><th>TITLE<ui-icon name="sort"></ui-icon></th><th>CREW / EMPLOYEES<ui-icon name="sort"></ui-icon></th><th>CUSTOMER NAME<ui-icon name="sort"></ui-icon></th><th>FREQUENCY</th><th>STATUS</th><th>VISIT NOTES</th><th>BH<ui-icon name="sort"></ui-icon></th><th>VISIT TOTAL</th><th></th><th></th>
  </tr></thead>
  <tbody></tbody>
</table>`,
function (root) {
  root.querySelector('tbody').innerHTML = VISITS.map(([customer, status, total], i) => `
    <tr>
      <td><div class="pick"><ui-icon name="handle"></ui-icon><check-box bare="Select visit ${i + 1}" checked></check-box></div></td>
      <td class="order">${i + 1}</td>
      <td><a class="title" href="#">Mowing - Recurring</a></td>
      <td class="crew">No Crew Assigned</td>
      <td>${customer}</td>
      <td><a href="#">Recurring</a></td>
      <td><span class="badge ${status}">${status}</span></td>
      <td><ui-icon class="note ${total ? '' : 'blue'}" name="note"></ui-icon></td>
      <td>1.00</td>
      <td>${total}</td>
      <td><button type="button" aria-label="Edit"><ui-icon name="${status === 'Open' ? 'pencil' : 'redo'}"></ui-icon></button></td>
      <td><button type="button" aria-label="Delete"><ui-icon name="trash"></ui-icon></button></td>
    </tr>`).join('');
});

define('visit-panel', `
<style>
  :host { display: block; padding: 16px; }
  .selects { display: flex; justify-content: flex-end; gap: 8px; }
  .bulk { display: flex; align-items: center; margin: 27px 0 9px 14px; height: 20px; }
  .bulk ui-icon { margin: 7px 10px 0 0; color: #212529; }
  .bulk a { padding: 0 7px 0 6px; line-height: 20px; color: #1f83cc; text-decoration: none; border-right: 1px solid #ddd; box-sizing: border-box; height: 20px; }
  .bulk a:first-of-type { color: #f0262d; }
  .bulk a:last-child { border: 0; }
  .tools { display: flex; justify-content: flex-end; gap: 9px; }
</style>
<div class="selects"><select-box value="All Crews"></select-box><select-box value="All Employees"></select-box></div>
<div class="bulk"><ui-icon name="turn"></ui-icon><a href="#">Delete</a><a href="#">Close</a><a href="#">Close &amp; Invoice</a><a href="#">Reopen Events</a><a href="#">Duplicate Events</a><a href="#">Print</a><a href="#">Assign Crew</a><a href="#">Assign Employee</a></div>
<div class="tools"><ui-button tone="bright" size="small">Show Stats</ui-button><ui-button tone="dark" size="small" caret><ui-icon name="funnel"></ui-icon>Filter</ui-button></div>
<visit-table></visit-table>`);

/* Guide arrows laid over the page */
define('guide-arrows', `
<style>
  :host { position: absolute; inset: 0; z-index: 3; pointer-events: none; }
  svg { display: block; width: 100%; height: 100%; overflow: visible; filter: drop-shadow(1px 4px 2px rgba(0, 0, 0, .5)); }
</style>
<svg aria-hidden="true" fill="#fbb900">
  <path d="M769 367L1230 287 1214 270 1277 290 1225 328 1233 307 773 387A9.800 9.800 0 0 1 769 367z"/>
  <path d="M685 454L397 656 395 635 364 691 428 681 408 672 697 471A10.500 10.500 0 0 0 685 454z"/>
</svg>`);

define('app-shell', `
<style>
  :host { display: grid; grid-template-columns: 275px minmax(0, 1fr) 15px; height: 100vh; position: relative; overflow: hidden; border-radius: 0 0 11px 11px; background: #f7f7f8; }
  side-nav { border-top: 1px solid #000; box-sizing: border-box; }
  main { overflow: hidden; }
  .card { margin: 0 39px 33px 35px; border-radius: 8px; background: #fff; box-shadow: 0 0 16px rgba(60, 60, 90, .03); }
  .route { display: grid; grid-template-columns: minmax(0, 489fr) minmax(0, 995fr); gap: 24px; padding: 0 24px; }
  .track { box-sizing: border-box; border: 1px solid #e4e4e6; border-top-color: #d4d4d6; background: #fafafa; padding: 117px 2px 0 3px; }
  .thumb { height: 362px; border-radius: 4px; background: #c2c2c3; }
  .chat { position: absolute; right: 40px; bottom: 25px; z-index: 4; width: 60px; height: 60px; padding: 0; border: 0; border-radius: 17px; background: linear-gradient(150deg, #2e63ad, #4a7ab9 50%, #8aa7d4); box-shadow: 0 1px 8px rgba(0, 0, 0, .12); }
</style>
<side-nav></side-nav>
<main>
  <top-bar></top-bar>
  <section class="card route"><route-settings></route-settings><map-panel></map-panel></section>
  <section class="card"><visit-panel></visit-panel></section>
</main>
<div class="track"><div class="thumb"></div></div>
<guide-arrows></guide-arrows>
<button class="chat" type="button" aria-label="Open chat"><ui-icon name="chat"></ui-icon></button>`);
</script>
</body>
</html>
